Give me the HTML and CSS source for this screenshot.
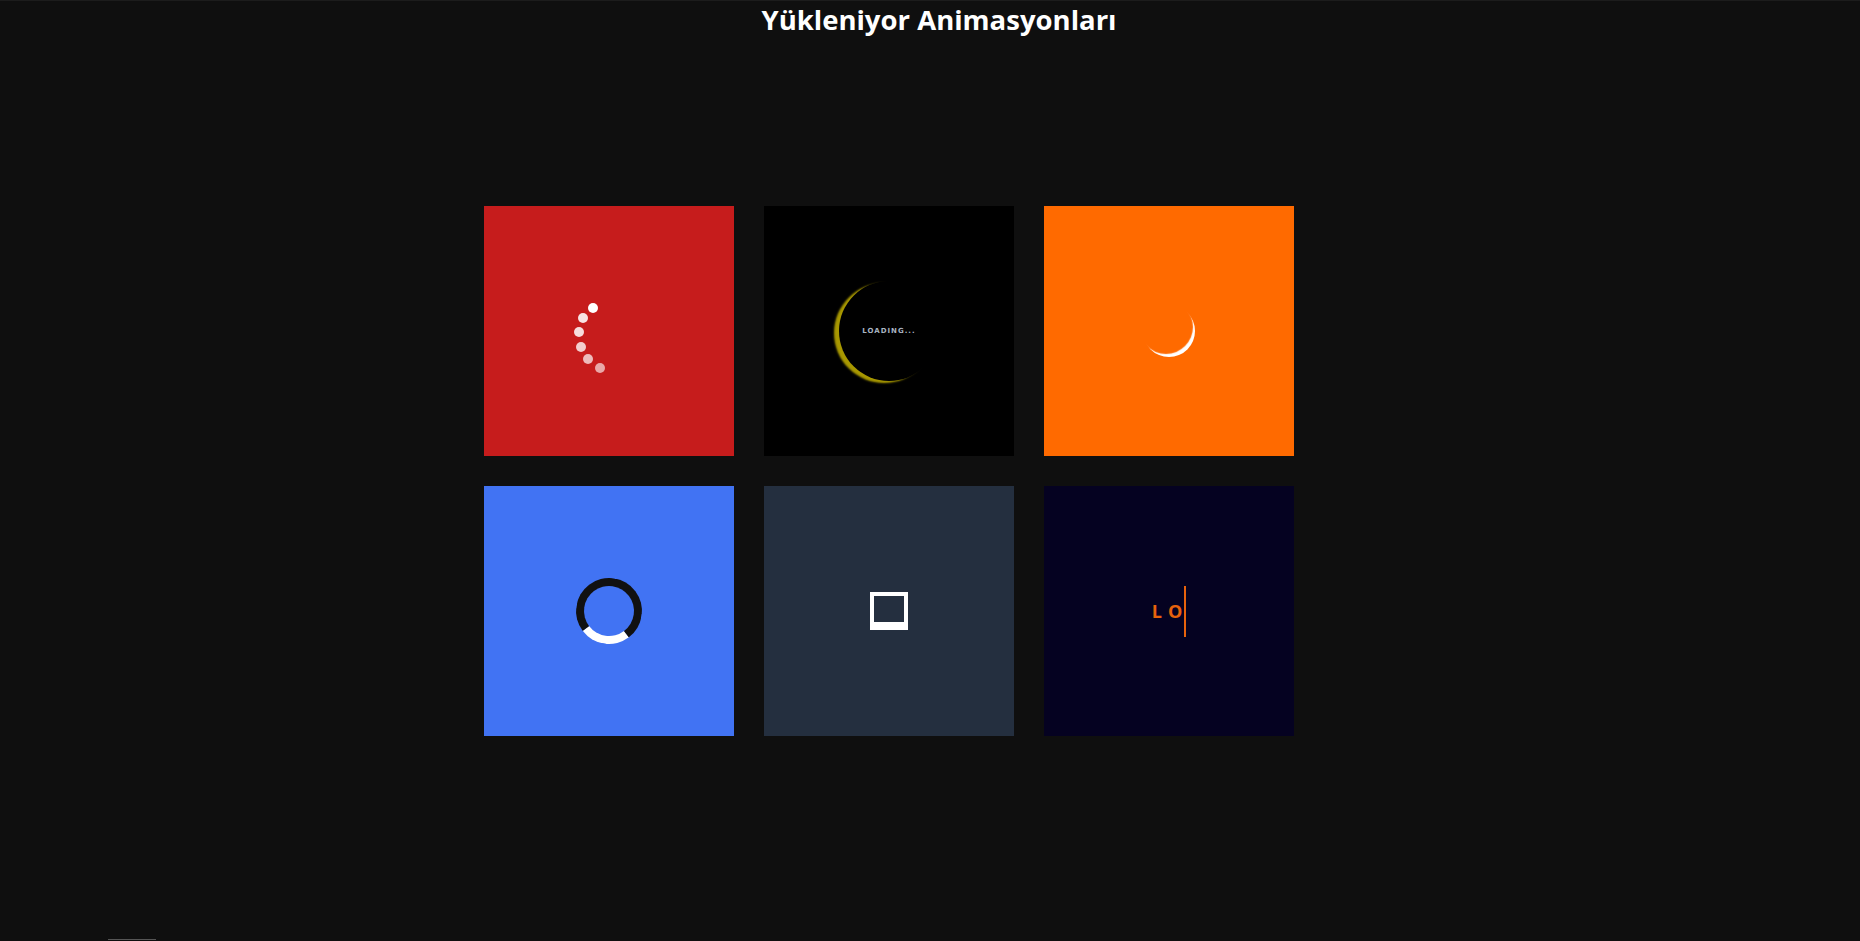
FILE: index.html
```html
<!DOCTYPE html>
<html lang="tr">
<head>
<meta charset="utf-8">
<title>Yükleniyor Animasyonları</title>
<link rel="stylesheet" href="styles.css">
</head>
<body>
<h1 class="title">Yükleniyor Animasyonları</h1>
<main class="grid">
  <div class="tile tile-red">
    <div class="dots">
      <span class="dot d1"></span>
      <span class="dot d2"></span>
      <span class="dot d3"></span>
      <span class="dot d4"></span>
      <span class="dot d5"></span>
      <span class="dot d6"></span>
    </div>
  </div>
  <div class="tile tile-black">
    <div class="eclipse"></div>
    <span class="loading-text">LOADING...</span>
  </div>
  <div class="tile tile-orange">
    <div class="moon"></div>
  </div>
  <div class="tile tile-blue">
    <div class="ring"></div>
  </div>
  <div class="tile tile-slate">
    <div class="fillbox"></div>
  </div>
  <div class="tile tile-navy">
    <div class="typer"><span class="typed">LO</span><span class="caret"></span></div>
  </div>
</main>
<div class="footer-bar"></div>
</body>
</html>
```
FILE: styles.css
```css
html, body {
  margin: 0;
  padding: 0;
}
body {
  background: #0f0f0f;
  border-top: 1px solid #1c1c1c;
  min-height: 940px;
  box-sizing: border-box;
  display: flex;
  flex-direction: column;
  font-family: "Open Sans", "Liberation Sans", sans-serif;
}
.title {
  margin: 0;
  padding-left: 18px;
  text-align: center;
  color: #ffffff;
  font-family: "Open Sans", "Liberation Sans", sans-serif;
  font-weight: 700;
  font-size: 27.5px;
  line-height: 38px;
  height: 38px;
}
.grid {
  width: 892px;
  margin: 167px auto 0;
  display: grid;
  grid-template-columns: repeat(3, 250px);
  grid-auto-rows: 250px;
  gap: 30px;
}
.tile {
  position: relative;
  display: flex;
  align-items: center;
  justify-content: center;
}
.tile-red { background: #c61c1c; }
.tile-black { background: #000000; }
.tile-orange { background: #ff6a00; }
.tile-blue { background: #4173f3; }
.tile-slate { background: #242f3f; }
.tile-navy { background: #050221; }

/* red: dots on an arc */
.dots {
  position: relative;
  width: 250px;
  height: 250px;
}
.dot {
  position: absolute;
  width: 10px;
  height: 10px;
  border-radius: 50%;
  background: #fff;
}
.d1 { left: 104px; top: 97px; opacity: 1; }
.d2 { left: 94px; top: 107px; opacity: 0.88; }
.d3 { left: 90px; top: 121px; opacity: 0.85; }
.d4 { left: 92px; top: 136px; opacity: 0.78; }
.d5 { left: 99px; top: 148px; opacity: 0.7; }
.d6 { left: 111px; top: 157px; opacity: 0.62; }

/* black: eclipse */
.eclipse {
  width: 100px;
  height: 100px;
  border-radius: 50%;
  background: #000;
  box-shadow: -5px 2px 2px #a89800;
}
.loading-text {
  position: absolute;
  left: 0;
  right: 0;
  top: 120px;
  text-align: center;
  color: #a9b4c2;
  font-family: "DejaVu Sans", sans-serif;
  font-weight: 700;
  font-size: 7px;
  line-height: 10px;
  letter-spacing: 1px;
}

/* orange: crescent */
.moon {
  width: 52px;
  height: 52px;
  border-radius: 50%;
  box-shadow: inset -3px -4px 1px -1px #ffffff;
}

/* blue: ring */
.ring {
  width: 50px;
  height: 50px;
  border-radius: 50%;
  border: 8px solid #111111;
  border-bottom-color: #ffffff;
  transform: rotate(8deg);
}

/* slate: filling box */
.fillbox {
  width: 30px;
  height: 26px;
  border: 4px solid #ffffff;
  border-bottom-width: 8px;
}

/* navy: typewriter */
.typer {
  display: flex;
  align-items: center;
}
.typed {
  color: #e8620c;
  font-family: "Open Sans", sans-serif;
  font-weight: 700;
  font-size: 18px;
  letter-spacing: 6px;
  line-height: 20px;
}
.caret {
  width: 2px;
  height: 51px;
  background: #e8620c;
  margin-left: -4px;
}

.footer-bar {
  margin-top: auto;
  margin-left: 108px;
  width: 48px;
  height: 1px;
  background: #555555;
}
```
